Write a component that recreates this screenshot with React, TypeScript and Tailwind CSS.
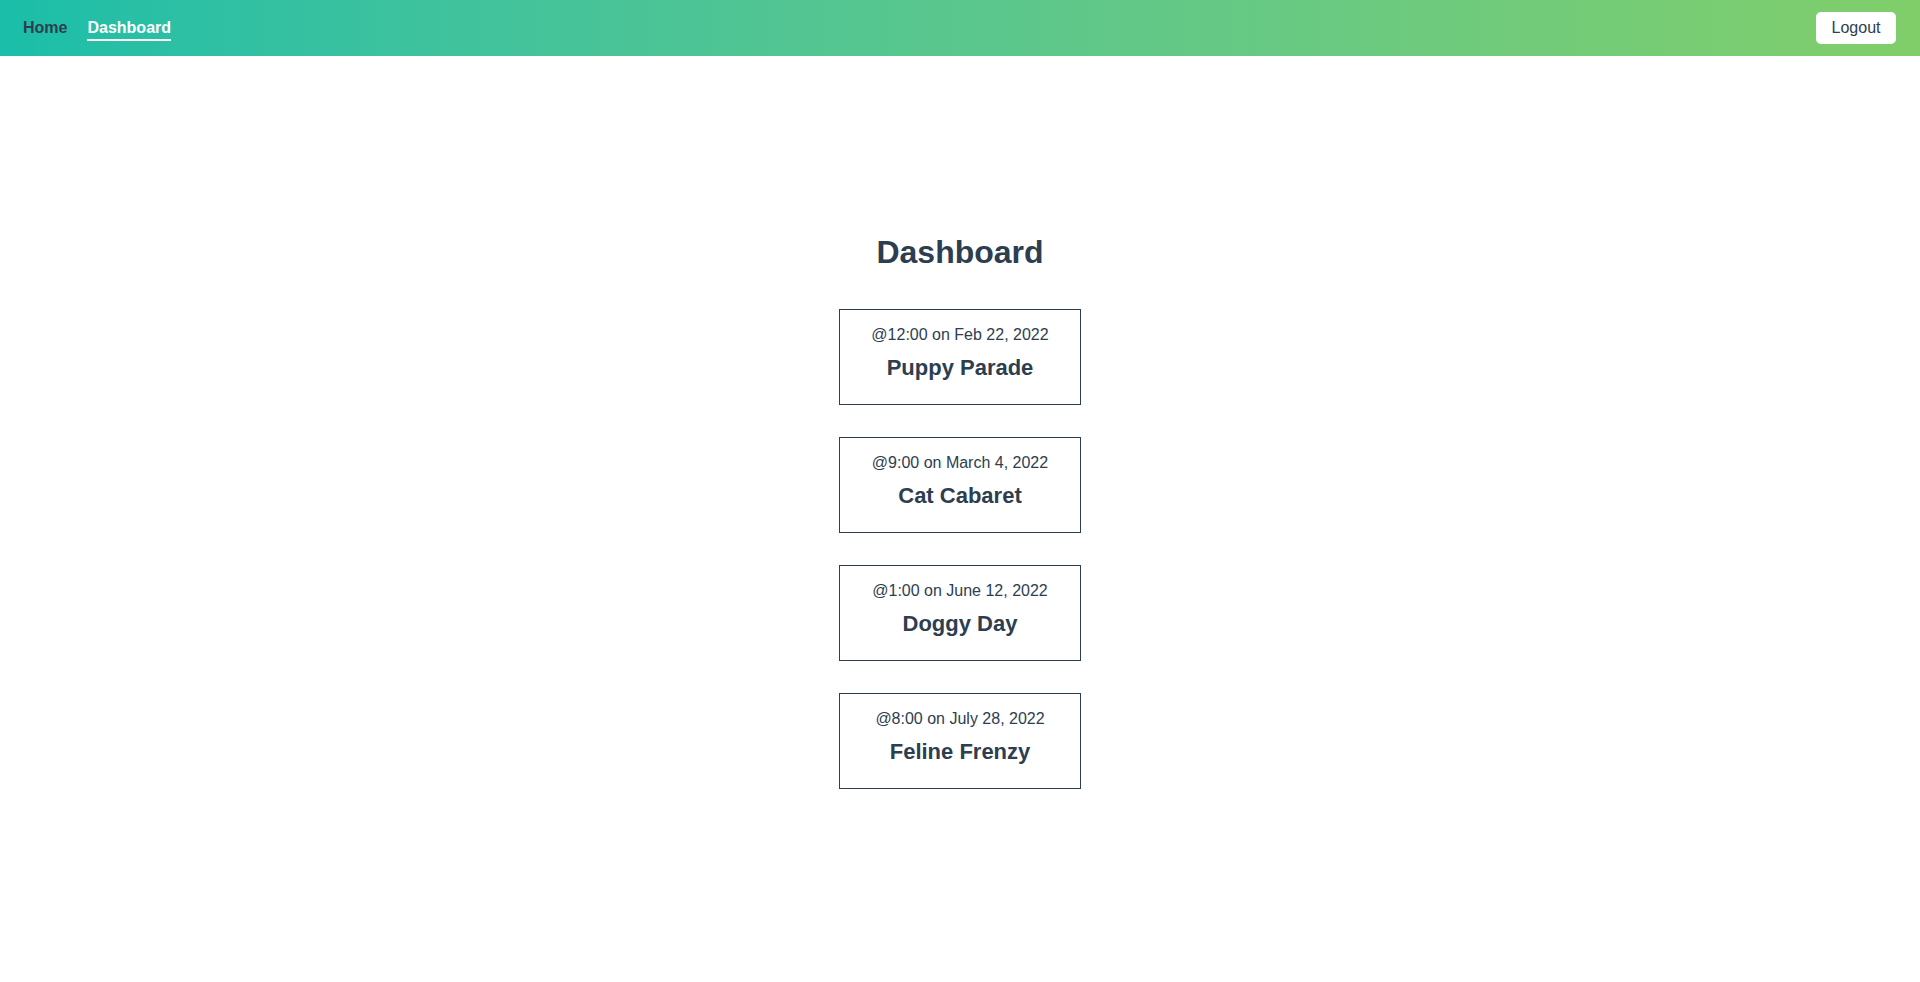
const events = [
  { when: '@12:00 on Feb 22, 2022', name: 'Puppy Parade' },
  { when: '@9:00 on March 4, 2022', name: 'Cat Cabaret' },
  { when: '@1:00 on June 12, 2022', name: 'Doggy Day' },
  { when: '@8:00 on July 28, 2022', name: 'Feline Frenzy' },
];

function NavBar() {
  return (
    <nav className="h-14 flex items-center justify-between pl-[23px] pr-6 bg-gradient-to-r from-[#19bea9] to-[#80ce6a]">
      <div className="flex items-center gap-5 mt-1 text-base font-bold leading-[18px]">
        <a href="#" className="text-[#2c3e50] pb-[2px] border-b-2 border-transparent">Home</a>
        <a href="#" className="text-white pb-[2px] border-b-2 border-white">Dashboard</a>
      </div>
      <button className="h-8 w-20 rounded-[5px] bg-white text-base text-[#2c3e50]">Logout</button>
    </nav>
  );
}

function EventCard({ when, name }: { when: string; name: string }) {
  return (
    <div className="w-[242px] border border-[#2c3e50] pt-4 pb-6 text-center">
      <p className="text-base leading-[18px]">{when}</p>
      <h3 className="mt-[11px] text-[22px] leading-[25px] font-bold">{name}</h3>
    </div>
  );
}

export default function App() {
  return (
    <div className="min-h-[982px] bg-white text-[#2c3e50] font-['Liberation_Sans',Arial,sans-serif]">
      <NavBar />
      <main className="flex flex-col items-center pt-[178px]">
        <h1 className="text-[32px] leading-[37px] font-bold mb-[38px]">Dashboard</h1>
        <div className="flex flex-col items-center gap-8">
          {events.map((e) => (
            <EventCard key={e.name} when={e.when} name={e.name} />
          ))}
        </div>
      </main>
    </div>
  );
}
